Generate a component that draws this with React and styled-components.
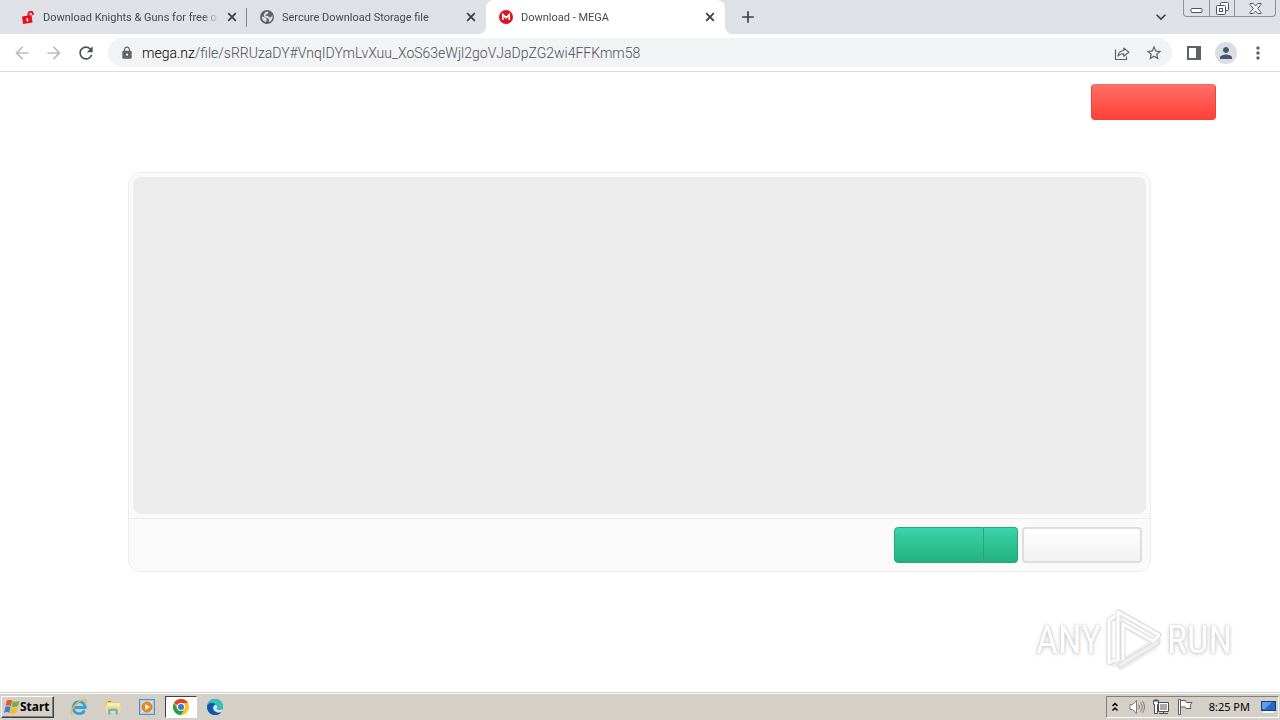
import React from 'react'
import styled, { createGlobalStyle, css } from 'styled-components'
import {
    MdAdd,
    MdArrowBack,
    MdArrowForward,
    MdExpandMore,
    MdLock,
    MdMoreVert,
    MdPerson,
    MdRefresh,
    MdStarBorder
} from 'react-icons/md'

const tabs = [
    { title: 'Download Knights & Guns for free or', icon: 'lock', divider: true },
    { title: 'Sercure Download Storage file', icon: 'globe' },
    { title: 'Download - MEGA', icon: 'mega', active: true }
]

const Favicon = ({ name }) => {
    if (name === 'lock') {
        return (
            <svg width='14' height='14' viewBox='0 0 14 14' aria-hidden='true'>
                <path d='M7.500 7V4a2.200 2.200 0 0 1 4.300-.6V5' fill='none' stroke='#e8101c' strokeWidth='2' />
                <path d='M1 6.500l9.500-1.500 1 7.500L2 14z' fill='#e8101c' />
                <path d='M5.200 8.600l1.800-.3.3 3-1.400.2z' fill='#fff' />
            </svg>
        )
    }
    if (name === 'globe') {
        return (
            <svg width='14' height='14' viewBox='0 0 14 14' aria-hidden='true'>
                <circle cx='7' cy='7' r='7' fill='#5f6368' />
                <path d='M2 6.200l3.200 1.500 1.600 1.400-.6 3C3.600 11.600 1.600 9.200 2 6.200zM5 2.600l2.500-1 1 .8-.8 1.400-1.900.9-.5 1 2.700.2 1.600 1.500 1.500-.2 1-2.200c1.300 3-.3 6-3.300 7l.3-2.200-1.200-1.600-3.200-1-1-2z' fill='#dee1e6' />
            </svg>
        )
    }
    return (
        <svg width='14' height='14' viewBox='0 0 14 14' aria-hidden='true'>
            <circle cx='7' cy='7' r='7' fill='#e0101e' />
            <path d='M3.800 10V4.600L7 7.700l3.200-3.100V10' fill='none' stroke='#fff' strokeWidth='1.700' />
        </svg>
    )
}

const TabCloseIcon = () => (
    <svg width='14' height='14' viewBox='0 0 14 14' aria-hidden='true'>
        <path d='M3.200 3.200l7.600 7.600M10.800 3.200l-7.600 7.600' stroke='#3c4043' strokeWidth='1.800' />
    </svg>
)

const ShareIcon = () => (
    <svg width='16' height='16' viewBox='0 0 16 16' fill='none' stroke='#5f6368' aria-hidden='true'>
        <path d='M1.500 4.500v10h11v-3' strokeWidth='1.200' />
        <path d='M4 11c.4-3.600 2.300-5.300 5.800-5.500V3l5 4.200-5 4.100V8.800C7.200 8.700 5.500 9.400 4 11z' strokeWidth='1.100' strokeLinejoin='round' />
    </svg>
)

const PanelIcon = () => (
    <svg width='16' height='16' viewBox='0 0 16 16' aria-hidden='true'>
        <rect x='2' y='2' width='12' height='12' fill='none' stroke='#5f6368' strokeWidth='2' />
        <rect x='10' y='2' width='4' height='12' fill='#5f6368' />
    </svg>
)

const MinimizeIcon = () => (
    <svg width='13' height='13' viewBox='0 0 13 13' aria-hidden='true'>
        <rect x='1' y='6.500' width='11' height='4' rx='1' fill='#fff' stroke='#4d5360' />
    </svg>
)

const RestoreIcon = () => (
    <svg width='13' height='13' viewBox='0 0 13 13' fill='#fff' stroke='#4d5360' aria-hidden='true'>
        <rect x='4.500' y='.5' width='8' height='8' rx='1' />
        <rect x='.5' y='3.500' width='9' height='9' rx='1' />
        <rect x='3.500' y='6.500' width='3' height='3' />
    </svg>
)

const CloseIcon = () => (
    <svg width='13' height='13' viewBox='0 0 13 13' aria-hidden='true'>
        <path d='M1 1.500h3.200l2.300 2.600 2.300-2.600H12v1L8.700 6.500l3.300 4v1H8.800L6.500 8.900l-2.300 2.600H1v-1l3.300-4L1 2.500z' fill='#fff' stroke='#4d5360' />
    </svg>
)

const WindowsLogo = () => (
    <svg width='16' height='16' viewBox='0 0 16 16' aria-hidden='true'>
        <path d='M2.800 1.500c2-1.200 3.800-1 5.400 0L6.900 7.100c-1.700-1-3.500-1-5.300 0z' fill='#e8582a' />
        <path d='M8.800 2c1.800 1 4 1 6.700-.3L14 7.300c-2.300 1.200-4.400 1.200-6.500.2z' fill='#74b43c' />
        <path d='M1.400 8c1.800-1 3.600-1 5.300 0L5.300 13.700c-1.600-1-3.500-1-5.300 0z' fill='#3f80cf' />
        <path d='M7.300 8.400c2 1 4.100 1 6.500-.2l-1.500 5.600c-2.300 1.200-4.400 1.200-6.400.1z' fill='#f8bd25' />
    </svg>
)

const ExplorerIcon = () => (
    <svg width='18' height='18' viewBox='0 0 18 18' fill='none' aria-hidden='true'>
        <path d='M14.500 12.500A6 6 0 1 1 15.200 9.500H5' stroke='#35a1dc' strokeWidth='2.800' />
        <path d='M2.500 16.500C-1 14 5 5 12 2.200c3.500-1.400 5 .1 3.700 3' stroke='#e9b93a' strokeWidth='1.300' />
    </svg>
)

const FolderIcon = () => (
    <svg width='18' height='18' viewBox='0 0 18 18' aria-hidden='true'>
        <path d='M2 3l1-1h4l1 2h7v11H2z' fill='#e9c96a' />
        <path d='M3 5h13v4H3z' fill='#fbeeb0' />
        <path d='M4 3.500h3' stroke='#5caa54' />
        <path d='M1 8h16l-1 7H2z' fill='#f6dc86' />
        <path d='M4 16.500v-4q0-2 2-2h6q2 0 2 2v4h-2.500V13h-5v3.500z' fill='#6db5dc' />
    </svg>
)

const MediaIcon = () => (
    <svg width='18' height='18' viewBox='0 0 18 18' aria-hidden='true'>
        <rect x='1.500' y='1.500' width='15' height='15' fill='#a8cdec' stroke='#5590bf' />
        <rect x='3.500' y='3.500' width='11' height='11' fill='#d8eaf8' />
        <circle cx='9' cy='9' r='5.500' fill='#f0831c' />
        <path d='M7.300 6l4.700 3-4.700 3z' fill='#fff' />
    </svg>
)

const ChromeIcon = () => (
    <svg width='16' height='16' viewBox='0 0 16 16' aria-hidden='true'>
        <circle cx='8' cy='8' r='8' fill='#f9c51c' />
        <path d='M8 8L1.070 4A8 8 0 0 1 14.930 4H8z' fill='#e2402f' />
        <path d='M1.070 4A8 8 0 0 0 8 16l3.460-6L8 8 4.540 10z' fill='#289e4b' />
        <circle cx='8' cy='8' r='4' fill='#fff' />
        <circle cx='8' cy='8' r='3' fill='#3478e5' />
    </svg>
)

const EdgeIcon = () => (
    <svg width='16' height='16' viewBox='0 0 16 16' aria-hidden='true'>
        <circle cx='8' cy='8' r='8' fill='#1673c8' />
        <path d='M.2 6.800C1 2.500 4.300 0 8 0c5 0 8 3.500 8 7 0 2.700-2 4-4.200 4-2 0-2.800-.8-1.900-2 .9-1.600-.5-4-3.400-4C3.500 5 1 6.500.2 6.800z' fill='#35c2b4' />
        <path d='M.2 6.800C2 2.500 7 3.300 8.700 5.500 6 5 4.500 8 5.600 10.600c1.100 2.800 5 4.200 8.800 2.200C11.500 17.500 2.500 17.500.2 10z' fill='#1555a5' />
        <path d='M8.700 5.700c1.700 1.100 1.900 2.400 1.200 3.400-.8 1.300.3 2 2.600 1.900 1.500-.1 2.500-.8 3-1.500.4 1.500-.2 2.400-1.300 3.400-3.800 1.500-7.200-.2-7.900-3.400-.3-1.700.8-3.600 2.400-3.800z' fill='#d5e8ec' />
    </svg>
)

const ChevronsIcon = () => (
    <svg width='8' height='10' viewBox='0 0 8 10' fill='none' stroke='#000' strokeWidth='1.500' aria-hidden='true'>
        <path d='M1.500 4L4 1.500 6.500 4M1.500 8.500L4 6l2.500 2.500' />
    </svg>
)

const SpeakerIcon = () => (
    <svg width='16' height='16' viewBox='0 0 16 16' fill='none' stroke='#7c7c7c' aria-hidden='true'>
        <path d='M1 5.500h2.500l4-4v13l-4-4H1z' fill='#fff' />
        <path d='M9.500 5.500q2 2.500 0 5M11.500 3.500q3.500 4.500 0 9M13.500 2q4 6 0 12' />
    </svg>
)

const NetworkIcon = () => (
    <svg width='16' height='16' viewBox='0 0 16 16' aria-hidden='true'>
        <path d='M5.500 3.500h10v9h-10z' fill='#fff' stroke='#4c4c4c' />
        <path d='M7 5h7v6H7z' fill='#a9a9a9' />
        <path d='M6 14.500h9M10.500 13v2' stroke='#4c4c4c' />
        <path d='M.5 1.500h5v4h-1v9h-3v-9h-1zM2 0v3M4 0v3' fill='#fff' stroke='#4c4c4c' />
    </svg>
)

const FlagIcon = () => (
    <svg width='16' height='16' viewBox='0 0 16 16' fill='#fff' stroke='#5c5c5c' aria-hidden='true'>
        <path d='M3.500 1.500h5l1 2h5.500l-2 3 1 3H9l-1-1.500H3.500z' />
        <path d='M1.500.5h2v15h-2z' />
    </svg>
)

const DesktopIcon = () => (
    <svg width='15' height='12' viewBox='0 0 15 12' aria-hidden='true'>
        <rect x='.5' y='.5' width='14' height='9' fill='#2767c9' stroke='#173c7d' />
        <path d='M1 1h10L4 8H1z' fill='#5c9cef' />
        <path d='M2 11h11' stroke='#f4f4f4' strokeWidth='2' />
    </svg>
)

const PlayLogo = () => (
    <svg width='58' height='64' viewBox='0 0 58 64' fill='none' strokeLinejoin='round' aria-hidden='true'>
        <path d='M15 6v42M15 5l38 22M9 10l-5 3v40l5 3M16 15l32 19M53 32L14 56M50 38L16 59' stroke='#d4d4d4' strokeWidth='7' strokeLinecap='round' opacity='.35' />
        <path d='M10 8L4 12v43l6-3M13 52V4l41 23-6 6L18 16v36' stroke='#dcdcdc' strokeWidth='5' />
        <path d='M54 31v5L15 60l-3-4 42-25' fill='#f0f0f0' stroke='#e2e2e2' strokeWidth='2' />
        <path d='M10 8L4 12v43l6-3M13 52V4l41 23-6 6L18 16v36' stroke='#fff' strokeWidth='3' />
    </svg>
)

const launchers = [
    { label: 'Internet Explorer', Icon: ExplorerIcon },
    { label: 'Windows Explorer', Icon: FolderIcon },
    { label: 'Media Player', Icon: MediaIcon },
    { label: 'Google Chrome', Icon: ChromeIcon, pressed: true },
    { label: 'Microsoft Edge', Icon: EdgeIcon }
]

const App = () => {
    return (
        <>
            <GlobalStyle />
            <Desktop>
                <TabStrip>
                    {tabs.map((tab) => (
                        <Tab key={tab.title} $active={tab.active} $divider={tab.divider}>
                            <Favicon name={tab.icon} />
                            <TabTitle>{tab.title}</TabTitle>
                            <IconButton $size={14} aria-label='Close tab'><TabCloseIcon /></IconButton>
                        </Tab>
                    ))}
                    <NewTabButton $size={18} $color='#3c4043' aria-label='New tab'><MdAdd size={20} /></NewTabButton>
                    <TabSearchButton $size={16} $color='#3c4043' aria-label='Search tabs'><MdExpandMore size={20} /></TabSearchButton>
                    <WindowControls>
                        <WindowButton $width={25} aria-label='Minimize'><MinimizeIcon /></WindowButton>
                        <WindowButton $width={25} aria-label='Restore'><RestoreIcon /></WindowButton>
                        <WindowButton $width={41} aria-label='Close'><CloseIcon /></WindowButton>
                    </WindowControls>
                </TabStrip>
                <Toolbar>
                    <NavButtons>
                        <IconButton $size={20} $color='#babcbe' aria-label='Back'><MdArrowBack size={20} /></IconButton>
                        <IconButton $size={20} $color='#babcbe' aria-label='Forward'><MdArrowForward size={20} /></IconButton>
                        <IconButton $size={20} $color='#4f5357' aria-label='Reload'><MdRefresh size={20} /></IconButton>
                    </NavButtons>
                    <AddressBar>
                        <MdLock size={14} color='#5f6368' />
                        <AddressText>
                            <AddressHost htmlFor='address'>mega.nz</AddressHost>
                            <AddressInput id='address' type='text' spellCheck='false' defaultValue='/file/sRRUzaDY#VnqIDYmLvXuu_XoS63eWjl2goVJaDpZG2wi4FFKmm58' />
                        </AddressText>
                        <AddressActions>
                            <IconButton $size={16} aria-label='Share'><ShareIcon /></IconButton>
                            <IconButton $size={16} aria-label='Bookmark'><MdStarBorder size={18} /></IconButton>
                        </AddressActions>
                    </AddressBar>
                    <ToolbarActions>
                        <IconButton $size={16} aria-label='Side panel'><PanelIcon /></IconButton>
                        <ProfileButton $size={22} $color='#4a5670' aria-label='Profile'><MdPerson size={18} /></ProfileButton>
                        <IconButton $size={16} aria-label='Menu'><MdMoreVert size={20} /></IconButton>
                    </ToolbarActions>
                </Toolbar>
                <Page>
                    <PageHeader>
                        <RedButton aria-label='Create account' />
                    </PageHeader>
                    <FileCard>
                        <Preview />
                        <CardFooter>
                            <SplitButton>
                                <GreenButton $width={90} aria-label='Download' />
                                <GreenButton $width={34} $last aria-label='Download options' />
                            </SplitButton>
                            <PlainButton aria-label='Save to cloud' />
                        </CardFooter>
                    </FileCard>
                    <Watermark>
                        <WatermarkText>ANY</WatermarkText>
                        <PlayLogo />
                        <WatermarkText>RUN</WatermarkText>
                    </Watermark>
                </Page>
                <Taskbar>
                    <StartButton><WindowsLogo />Start</StartButton>
                    <Launchers>
                        {launchers.map(({ label, Icon, pressed }) => (
                            <Launcher key={label} $pressed={pressed} aria-label={label}><Icon /></Launcher>
                        ))}
                    </Launchers>
                    <Tray>
                        <ChevronsIcon />
                        <TrayIcons>
                            <SpeakerIcon />
                            <NetworkIcon />
                            <FlagIcon />
                        </TrayIcons>
                        <Clock>8:25 PM</Clock>
                        <DesktopIcon />
                    </Tray>
                </Taskbar>
            </Desktop>
        </>
    )
}

export default App

const GlobalStyle = createGlobalStyle`
* {
    box-sizing: border-box;
}

body {
    margin: 0;
    font-family: Roboto, 'Liberation Sans', sans-serif;
}

button {
    margin: 0;
    padding: 0;
    border: 0;
    background: none;
    font: inherit;
}

svg {
    display: block;
    flex-shrink: 0;
}
`

const Desktop = styled.div`
display: flex;
flex-direction: column;
min-height: 100vh;
background: #fff;
`

const IconButton = styled.button`
display: flex;
flex-shrink: 0;
justify-content: center;
align-items: center;
width: ${({ $size }) => $size}px;
height: ${({ $size }) => $size}px;
color: ${({ $color }) => $color || '#5f6368'};
`

const TabStrip = styled.div`
display: flex;
align-items: center;
height: 34px;
padding: 0 4px 0 8px;
background: #dee1e6;
`

const Tab = styled.div`
position: relative;
display: flex;
align-items: center;
flex: 0 1 239px;
min-width: 0;
height: 34px;
padding: 0 8px 0 13px;
color: #45494d;

${({ $divider }) => $divider && css`
    &::after {
        content: '';
        position: absolute;
        right: 0;
        top: 8px;
        width: 1px;
        height: 19px;
        background: #80868b;
    }
`}

${({ $active }) => $active && css`
    background: #fff;
    border-radius: 8px 8px 0 0;

    &::before,
    &::after {
        content: '';
        position: absolute;
        bottom: 0;
        width: 8px;
        height: 8px;
    }

    &::before {
        right: 100%;
        background: radial-gradient(circle at 0 0, transparent 8px, #fff 8px);
    }

    &::after {
        left: 100%;
        background: radial-gradient(circle at 100% 0, transparent 8px, #fff 8px);
    }
`}
`

const TabTitle = styled.span`
flex: 1;
min-width: 0;
margin: 0 6px 0 8px;
padding-top: 2px;
overflow: hidden;
white-space: nowrap;
font-size: 11px;
line-height: 16px;
mask-image: linear-gradient(to right, #000 calc(100% - 16px), transparent);
`

const NewTabButton = styled(IconButton)`
margin-left: 14px;
`

const TabSearchButton = styled(IconButton)`
margin-left: auto;
`

const WindowControls = styled.div`
display: flex;
align-self: flex-start;
margin-left: 14px;
border: 1px solid #8b9099;
border-top: 0;
border-radius: 0 0 4px 4px;
`

const WindowButton = styled.button`
display: flex;
justify-content: center;
align-items: center;
width: ${({ $width }) => $width}px;
height: 16px;

& + & {
    border-left: 1px solid #8b9099;
}
`

const Toolbar = styled.div`
display: flex;
align-items: center;
height: 38px;
padding: 0 14px 0 12px;
background: #fff;
border-bottom: 1px solid #dadce0;
`

const NavButtons = styled.div`
display: flex;
gap: 12px;
margin-right: 12px;
`

const AddressBar = styled.div`
display: flex;
flex: 1;
align-items: center;
gap: 8px;
min-width: 0;
height: 29px;
padding: 0 10px 0 12px;
border-radius: 15px;
background: #f1f3f4;
`

const AddressText = styled.div`
display: flex;
flex: 1;
align-items: center;
min-width: 0;
font-size: 14px;
font-weight: 300;
line-height: 20px;
`

const AddressHost = styled.label`
color: #000;
`

const AddressInput = styled.input`
flex: 1;
min-width: 0;
padding: 0;
border: 0;
outline: 0;
background: none;
color: #4c5055;
font: inherit;
`

const AddressActions = styled.div`
display: flex;
gap: 16px;
`

const ToolbarActions = styled.div`
display: flex;
align-items: center;
gap: 13px;
margin-left: 14px;
`

const ProfileButton = styled(IconButton)`
border-radius: 50%;
background: #dadde2;
`

const Page = styled.main`
position: relative;
display: flex;
flex: 1;
flex-direction: column;
`

const PageHeader = styled.header`
display: flex;
justify-content: flex-end;
padding: 12px 64px 52px;
`

const RedButton = styled.button`
width: 125px;
height: 36px;
border: 1px solid #f0423b;
border-top-color: #f7665f;
border-radius: 4px;
background: linear-gradient(#ff6f66, #ff4036);
`

const FileCard = styled.section`
display: flex;
flex-direction: column;
width: calc(80% - 1px);
height: 400px;
margin: 0 10%;
border: 1px solid #ececec;
border-radius: 12px;
background: #fafafa;
`

const Preview = styled.div`
flex: 1;
margin: 4px;
border-radius: 8px;
background: #ececec;
`

const CardFooter = styled.footer`
display: flex;
justify-content: flex-end;
gap: 4px;
padding: 8px;
border-top: 1px solid #ececec;
`

const SplitButton = styled.div`
display: flex;
`

const GreenButton = styled.button`
width: ${({ $width }) => $width}px;
height: 36px;
border: 1px solid #27a57c;
border-left-width: ${({ $last }) => ($last ? 0 : 1)}px;
border-radius: ${({ $last }) => ($last ? '0 4px 4px 0' : '4px 0 0 4px')};
background: linear-gradient(#3bd3ab, #22b27c);
`

const PlainButton = styled.button`
width: 120px;
height: 36px;
border: 2px solid #dedede;
border-radius: 4px;
background: linear-gradient(#fff, #f1f1f1);
`

const Watermark = styled.div`
position: absolute;
right: 48px;
bottom: 20px;
display: flex;
align-items: center;
gap: 4px;
`

const WatermarkText = styled.span`
color: #fff;
font-family: 'Roboto Condensed', Roboto, sans-serif;
font-size: 38px;
line-height: 44px;
text-shadow: 0 0 2px #bbb, 0 1px 4px #ccc;
`

const Taskbar = styled.div`
display: flex;
align-items: center;
height: 28px;
padding: 1px 1px 0;
border-top: 1px solid #d4d0c8;
background: #d4d0c8;
box-shadow: inset 0 1px 0 #fff;
`

const StartButton = styled.button`
display: flex;
align-items: center;
width: 53px;
height: 22px;
padding-left: 2px;
border: 1px solid;
border-color: #fff #404040 #404040 #fff;
box-shadow: inset -1px -1px 0 #808080;
color: #000;
font-family: 'Noto Sans', sans-serif;
font-size: 12px;
font-weight: 700;
line-height: 16px;
`

const Launchers = styled.div`
display: flex;
gap: 2px;
margin-left: 9px;
`

const Launcher = styled.button`
display: flex;
justify-content: center;
align-items: center;
width: 32px;
height: 22px;

${({ $pressed }) => $pressed && css`
    border: 1px solid;
    border-color: #404040 #fff #fff #404040;
    background: #fff;
`}
`

const Tray = styled.div`
display: flex;
align-items: center;
height: 22px;
margin-left: auto;
padding: 0 2px 0 4px;
border: 1px solid;
border-color: #808080 #fff #fff #808080;
`

const TrayIcons = styled.div`
display: flex;
gap: 8px;
margin: 0 16px 0 10px;
`

const Clock = styled.time`
margin-right: 11px;
color: #000;
font-family: 'Noto Sans', sans-serif;
font-size: 11px;
line-height: 16px;
white-space: nowrap;
`
